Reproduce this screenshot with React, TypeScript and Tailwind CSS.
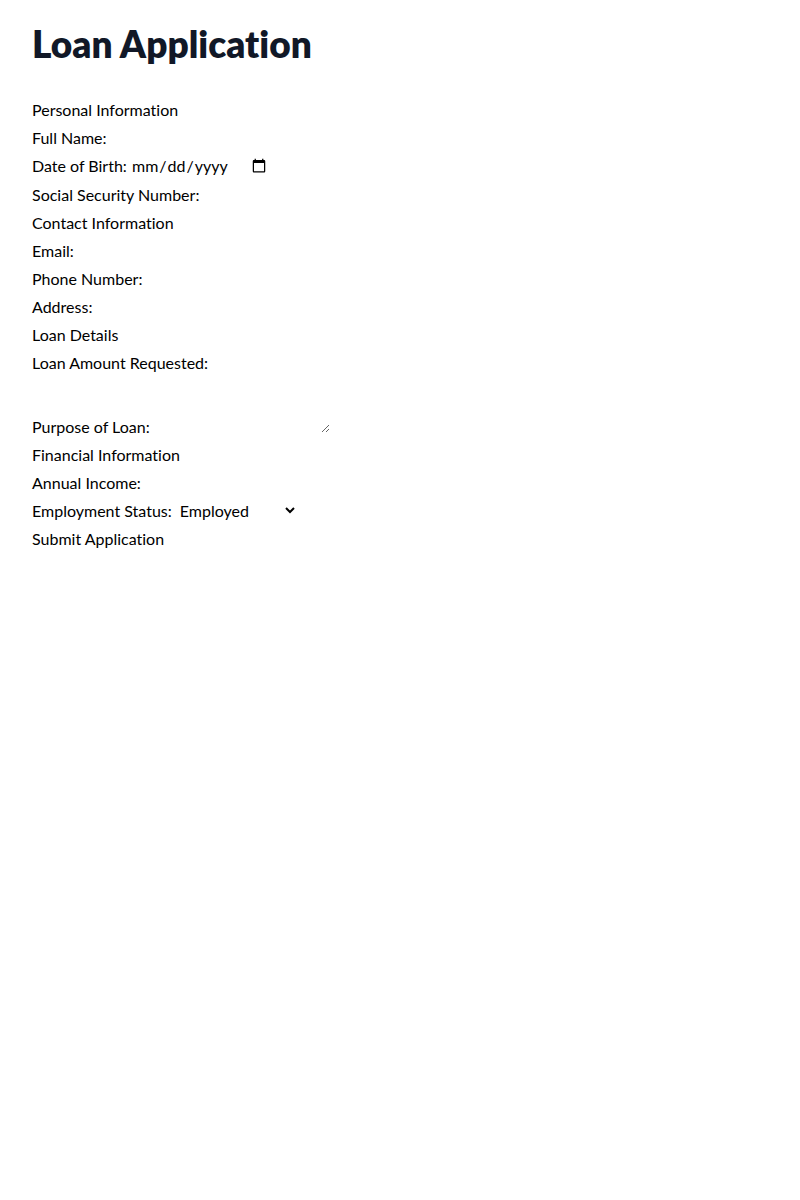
import React, { useState } from "react";

const LoanApplication: React.FC = () => {
  const [employment, setEmployment] = useState("Employed");

  return (
    <div className="px-8 pt-6 font-['Lato',sans-serif] text-black [font-variant-ligatures:none] [font-feature-settings:'liga'_0,'clig'_0]">
      <h1 className="text-[37px] leading-10 font-extrabold text-[#111827] mb-[34px]">Loan Application</h1>
      <form className="space-y-1" onSubmit={(e) => e.preventDefault()}>
        <div>Personal Information</div>
        <div>
          <label htmlFor="fullName">Full Name:</label> <input id="fullName" type="text" />
        </div>
        <div className="h-[25px]">
          <label htmlFor="dob">Date of Birth:</label>{" "}
          <input id="dob" type="date" className="w-[138px]" />
        </div>
        <div>
          <label htmlFor="ssn">Social Security Number:</label> <input id="ssn" type="text" />
        </div>
        <div>Contact Information</div>
        <div>
          <label htmlFor="email">Email:</label> <input id="email" type="email" />
        </div>
        <div>
          <label htmlFor="phone">Phone Number:</label> <input id="phone" type="tel" />
        </div>
        <div>
          <label htmlFor="address">Address:</label> <input id="address" type="text" />
        </div>
        <div>Loan Details</div>
        <div>
          <label htmlFor="amount">Loan Amount Requested:</label> <input id="amount" type="number" />
        </div>
        <div>
          <label htmlFor="purpose">Purpose of Loan:</label>{" "}
          <textarea id="purpose" className="w-[176px] h-[54px] align-baseline" />
        </div>
        <div>Financial Information</div>
        <div>
          <label htmlFor="income">Annual Income:</label> <input id="income" type="number" />
        </div>
        <div>
          <label htmlFor="employment">Employment Status:</label>{" "}
          <select
            id="employment"
            value={employment}
            onChange={(e) => setEmployment(e.target.value)}
          >
            <option value="Employed">Employed</option>
            <option value="Self-Employed">Self-Employed</option>
            <option value="Unemployed">Unemployed</option>
            <option value="Retired">Retired</option>
          </select>
        </div>
        <div>
          <button type="submit">Submit Application</button>
        </div>
      </form>
    </div>
  );
};

export default LoanApplication;
